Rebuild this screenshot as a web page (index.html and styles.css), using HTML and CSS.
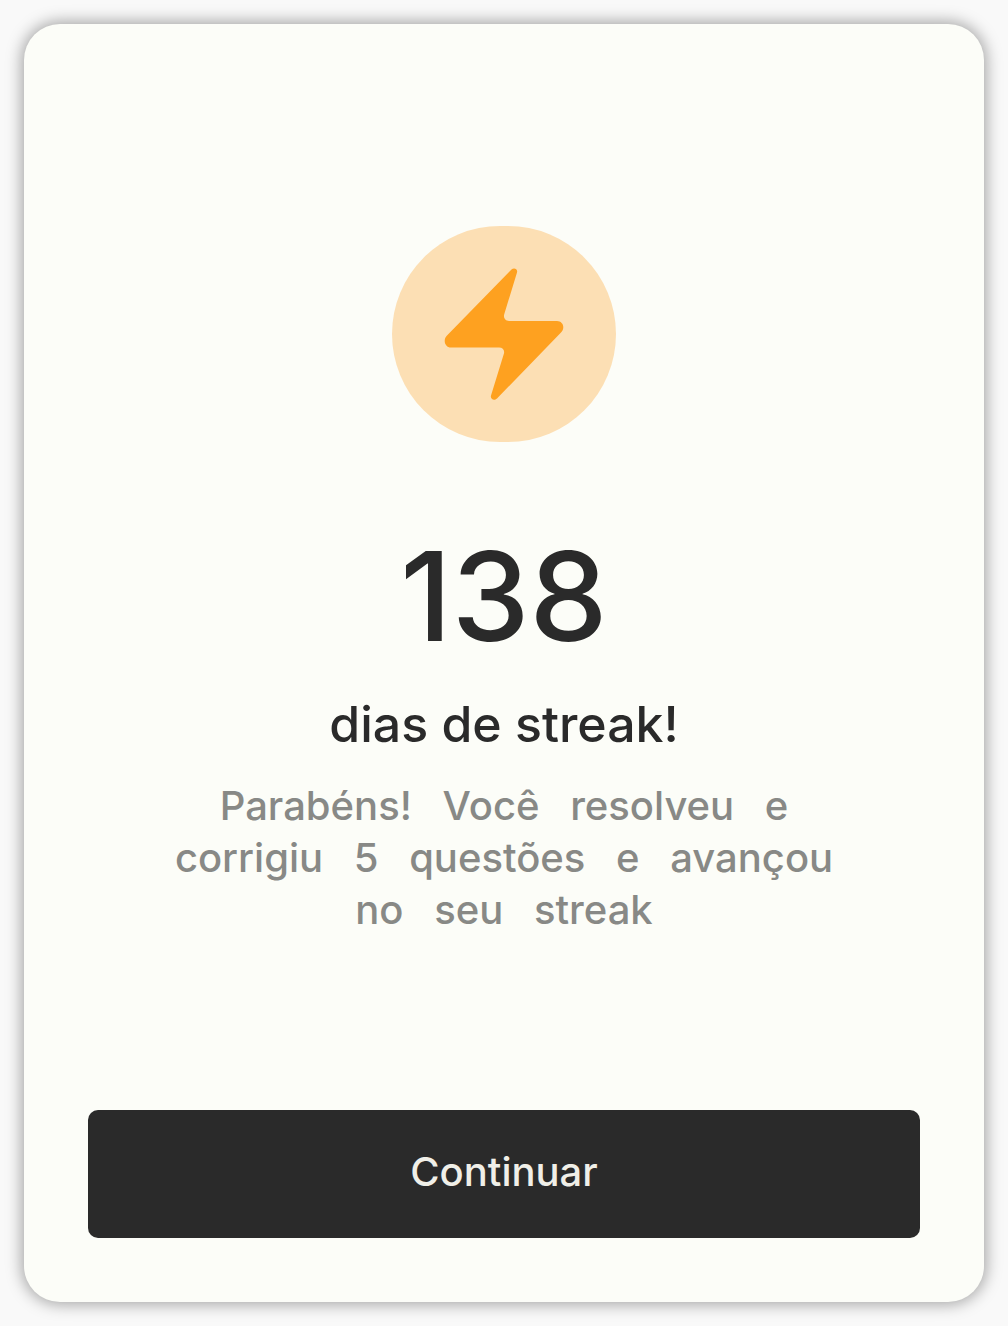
FILE: index.html
```html
<!DOCTYPE html>
<html lang="pt-BR">
<head>
  <meta charset="utf-8">
  <meta name="viewport" content="width=device-width, initial-scale=1">
  <title>Streak</title>
  <link rel="stylesheet" href="styles.css">
</head>
<body>
  <main class="card">
    <section class="summary">
      <div class="badge">
        <svg class="badge-icon" viewBox="0 0 224 216" aria-hidden="true">
          <path d="M119.500 43.500C122 41 126 43 125 46.500L112.300 88C111 92 113.500 95 117 95H165C171 95 173.500 102 169 106.500L105 172.500C102 175.500 98 173 99 169.500L111.800 128C113 124.500 111 121.500 107 121.500H59C53 121.500 50.500 114 55 109.500Z"/>
        </svg>
      </div>
      <h1 class="title">
        <span class="count">138</span>
        <span class="label">dias de streak!</span>
      </h1>
      <p class="message">Parabéns!&ensp; Você&ensp; resolveu&ensp; e<br>corrigiu&ensp; 5&ensp; questões&ensp; e&ensp; avançou<br>no&ensp; seu&ensp; streak</p>
    </section>
    <button class="continue" type="button">Continuar</button>
  </main>
</body>
</html>
```
FILE: styles.css
```css
* {
  box-sizing: border-box;
}

body {
  margin: 0;
  min-height: 100vh;
  padding: 24px;
  display: flex;
  background: #f9f9f9;
  color: #2a2a2a;
  font-family: Inter, "Liberation Sans", sans-serif;
  font-weight: 500;
}

.card {
  flex: 1;
  min-width: 0;
  padding: 64px;
  display: flex;
  flex-direction: column;
  border-radius: 36px;
  background: #fcfdf8;
  box-shadow: 0 0 16px 2px rgba(0, 0, 0, 0.36);
}

.summary {
  flex: 1;
  padding-top: 138px;
  display: flex;
  flex-direction: column;
  align-items: center;
  text-align: center;
}

.badge {
  width: 224px;
  height: 216px;
  border-radius: 108px;
  background: #fcdfb4;
}

.badge-icon {
  display: block;
  width: 100%;
  fill: #fea120;
}

.title {
  margin: 90px 0 0;
  display: flex;
  flex-direction: column;
  gap: 32px;
  font-weight: 500;
}

.count {
  font-size: 124px;
  line-height: 128px;
}

.label {
  font-size: 50px;
  line-height: 64px;
}

.message {
  margin: 24px 0 0;
  color: #888986;
  font-size: 40px;
  line-height: 52px;
}

.continue {
  width: 100%;
  height: 128px;
  padding: 0 0 6px;
  border: 0;
  border-radius: 10px;
  background: #2a2a2a;
  color: #f0efe8;
  font: inherit;
  font-size: 40px;
  cursor: pointer;
}
```
